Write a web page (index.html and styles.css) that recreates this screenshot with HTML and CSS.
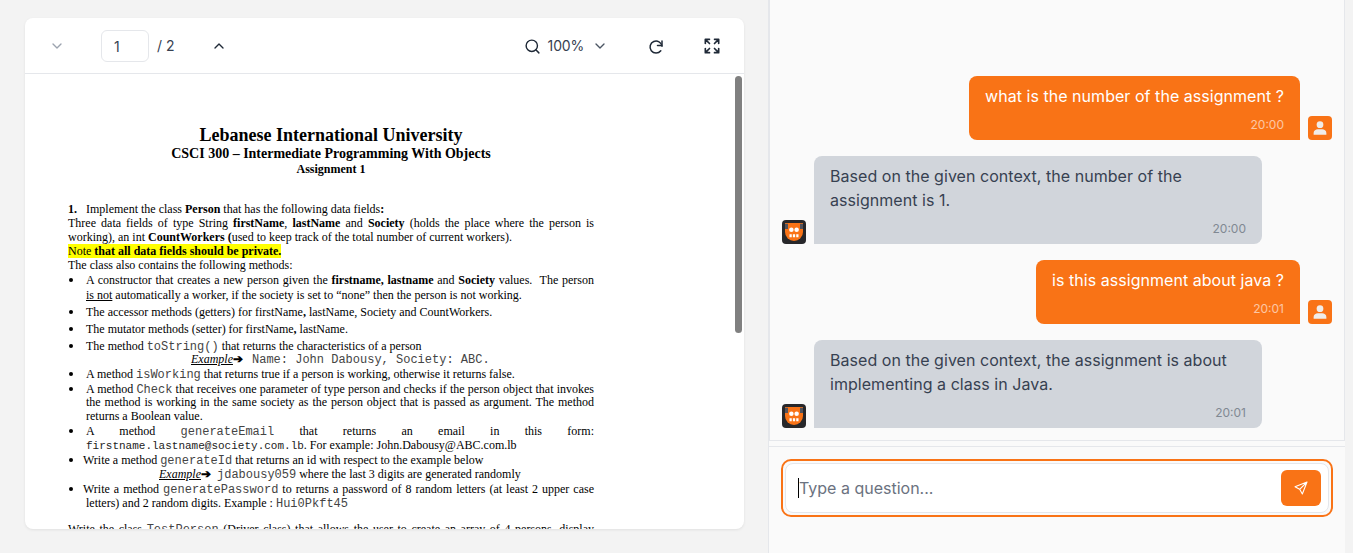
FILE: index.html
```html
<!DOCTYPE html>
<html lang="en">
<head>
    <meta charset="UTF-8">
    <title>Chat with PDF</title>
    <link rel="stylesheet" href="styles.css">
</head>
<body>
    <div class="app">
        <div class="viewer-pane">
            <div class="viewer">
                <div class="toolbar">
                    <svg class="icon chev-prev" viewBox="0 0 24 24"><path d="M6 9l6 6 6-6"/></svg>
                    <input class="page-input" type="text" value="1">
                    <span class="page-total">/ 2</span>
                    <svg class="icon chev-next" viewBox="0 0 24 24"><path d="M6 15l6-6 6 6"/></svg>
                    <svg class="icon search" viewBox="0 0 24 24"><circle cx="11" cy="11" r="8"/><path d="M21 21l-4.300-4.300"/></svg>
                    <span class="zoom-value">100%</span>
                    <svg class="icon chev-zoom" viewBox="0 0 24 24"><path d="M6 9l6 6 6-6"/></svg>
                    <svg class="icon reload" viewBox="0 0 24 24"><path d="M20 11a8 8 0 1 0-1.600 6"/><path d="M20 4v6h-6"/></svg>
                    <svg class="icon expand" viewBox="0 0 24 24"><path d="M4 9V4h5M4 4l5 5M15 4h5v5M20 4l-5 5M4 15v5h5M4 20l5-5M20 15v5h-5M20 20l-5-5"/></svg>
                </div>
                <div class="doc-scroll">
                    <div class="scroll-thumb"></div>
                    <div class="doc">
                        <div class="title">Lebanese International University</div>
                        <div class="subtitle">CSCI 300 – Intermediate Programming With Objects</div>
                        <div class="subsub">Assignment 1</div>

                        <div class="ln first"><b>1.</b>&nbsp;&nbsp; Implement the class <b>Person</b> that has the following data fields<b>:</b></div>
                        <div class="ln just">Three data fields of type String <b>firstName</b>, <b>lastName</b> and <b>Society</b> (holds the place where the person is</div>
                        <div class="ln">working), an int <b>CountWorkers (</b>used to keep track of the total number of current workers).</div>
                        <div class="ln"><span class="mark">Note <b>that all data fields should be private.</b></span></div>
                        <div class="ln">The class also contains the following methods:</div>
                        <div class="ln item g15 just">A constructor that creates a new person given the <b>firstname, lastname</b> and <b>Society</b> values.&nbsp; The person</div>
                        <div class="ln cont g15"><u>is not</u> automatically a worker, if the society is set to “none” then the person is not working.</div>
                        <div class="ln item g17">The accessor methods (getters) for firstName<b>,</b> lastName, Society and CountWorkers.</div>
                        <div class="ln item g17">The mutator methods (setter) for firstName<b>,</b> lastName.</div>
                        <div class="ln item g17">The method <code>toString()</code> that returns the characteristics of a person</div>
                        <div class="ln example g13"><i><u>Example</u></i><b class="arrow">➔</b> <code class="after-arrow">Name: John Dabousy, Society: ABC.</code></div>
                        <div class="ln item g15">A method <code>isWorking</code> that returns true if a person is working, otherwise it returns false.</div>
                        <div class="ln item g15 just">A method <code>Check</code> that receives one parameter of type person and checks if the person object that invokes</div>
                        <div class="ln cont g13 just">the method is working in the same society as the person object that is passed as argument. The method</div>
                        <div class="ln cont">returns a Boolean value.</div>
                        <div class="ln item g15 just">A method <code>generateEmail</code> that returns an email in this form:</div>
                        <div class="ln cont"><code class="small">firstname.lastname@society.com.lb</code>. For example: John.Dabousy@ABC.com.lb</div>
                        <div class="ln item tight g15">Write a method <code>generateId</code> that returns an id with respect to the example below</div>
                        <div class="ln example2"><i><u>Example</u></i><b class="arrow">➔</b> <code>jdabousy059</code> where the last 3 digits are generated randomly</div>
                        <div class="ln item tight g15 just">Write a method <code>generatePassword</code> to returns a password of 8 random letters (at least 2 upper case</div>
                        <div class="ln cont">letters) and 2 random digits. Example : <code>Hui0Pkft45</code></div>
                        <div class="ln g26 just">Write the class <code>TestPerson</code> (Driver class) that allows the user to create an array of 4 persons, display</div>
                    </div>
                </div>
            </div>
        </div>

        <div class="chat-pane">
            <div class="messages">
                <div class="row row-user">
                    <div class="bubble bubble-user">
                        <div class="msg">what is the number of the assignment ?</div>
                        <div class="time">20:00</div>
                    </div>
                    <div class="avatar avatar-user">
                        <svg viewBox="0 0 24 24"><circle cx="12" cy="7.500" r="4.500"/><path d="M3.500 21v-2.500C3.500 15 6.500 13.500 9 13.500h6c2.500 0 5.500 1.500 5.500 5V21z"/></svg>
                    </div>
                </div>
                <div class="row row-bot">
                    <div class="avatar avatar-bot">
                        <svg viewBox="0 0 24 24"><path class="face" d="M0 0h24v12a12 12 0 0 1-24 0z"/><path class="ear" d="M0 1h4v7H0zM20 1h4v7h-4z"/><circle class="eye" cx="8.500" cy="9" r="3"/><circle class="eye" cx="15.500" cy="9" r="3"/><path class="eye" d="M6 15h3v4H6zM10.500 15h3v4h-3zM15 15h3v4h-3z"/></svg>
                    </div>
                    <div class="bubble bubble-bot">
                        <div class="msg">Based on the given context, the number of the assignment is 1.</div>
                        <div class="time">20:00</div>
                    </div>
                </div>
                <div class="row row-user">
                    <div class="bubble bubble-user">
                        <div class="msg">is this assignment about java ?</div>
                        <div class="time">20:01</div>
                    </div>
                    <div class="avatar avatar-user">
                        <svg viewBox="0 0 24 24"><circle cx="12" cy="7.500" r="4.500"/><path d="M3.500 21v-2.500C3.500 15 6.500 13.500 9 13.500h6c2.500 0 5.500 1.500 5.500 5V21z"/></svg>
                    </div>
                </div>
                <div class="row row-bot">
                    <div class="avatar avatar-bot">
                        <svg viewBox="0 0 24 24"><path class="face" d="M0 0h24v12a12 12 0 0 1-24 0z"/><path class="ear" d="M0 1h4v7H0zM20 1h4v7h-4z"/><circle class="eye" cx="8.500" cy="9" r="3"/><circle class="eye" cx="15.500" cy="9" r="3"/><path class="eye" d="M6 15h3v4H6zM10.500 15h3v4h-3zM15 15h3v4h-3z"/></svg>
                    </div>
                    <div class="bubble bubble-bot">
                        <div class="msg">Based on the given context, the assignment is about implementing a class in Java.</div>
                        <div class="time">20:01</div>
                    </div>
                </div>
            </div>
            <div class="composer">
                <div class="ring">
                    <div class="field">
                        <span class="caret"></span>
                        <span class="placeholder">Type a question...</span>
                        <button class="send" type="button">
                            <svg viewBox="0 0 24 24"><path d="M21 3L3 10l7 4 4 7zM21 3L10 14"/></svg>
                        </button>
                    </div>
                </div>
            </div>
        </div>
    </div>
</body>
</html>
```

FILE: styles.css
```css
html, body {
    height: 100%;
    margin: 0;
    overflow: hidden;
}
body {
    background-color: #f3f3f3;
    font-family: Inter, "Liberation Sans", sans-serif;
    color: #374151;
}
.app {
    display: flex;
    height: 553px;
}

/* pdf viewer */
.viewer-pane {
    width: 768px;
    flex: none;
    padding: 18px 24px 24px 25px;
    box-sizing: border-box;
}
.viewer {
    height: 511px;
    background: white;
    border-radius: 8px;
    box-shadow: 0 1px 3px rgba(0, 0, 0, 0.08);
    display: flex;
    flex-direction: column;
    overflow: hidden;
}
.toolbar {
    height: 56px;
    flex: none;
    box-sizing: border-box;
    border-bottom: 1px solid #e5e7eb;
    padding: 12px 0 0 24px;
    display: flex;
    align-items: flex-start;
    font-size: 14px;
}
.icon {
    flex: none;
    width: 16px;
    height: 16px;
    margin-top: 8px;
    fill: none;
    stroke: #1f2937;
    stroke-width: 2;
    stroke-linecap: round;
    stroke-linejoin: round;
}
.chev-prev {
    stroke: #9ca3af;
}
.page-input {
    width: 48px;
    height: 32px;
    box-sizing: border-box;
    margin-left: 36px;
    padding: 0 12px;
    border: 1px solid #e5e7eb;
    border-radius: 6px;
    font: 14px Inter, sans-serif;
    color: #374151;
}
.page-total {
    margin-left: 8px;
    line-height: 32px;
}
.chev-next {
    margin-left: 36px;
}
.search {
    margin-left: 297px;
    width: 17px;
    height: 17px;
}
.zoom-value {
    margin-left: 7px;
    line-height: 32px;
    letter-spacing: -0.1px;
}
.chev-zoom {
    margin-left: 8px;
    stroke: #4b5563;
}
.reload {
    margin-left: 39px;
    width: 18px;
    height: 18px;
}
.expand {
    margin-left: 37px;
    margin-top: 6px;
    width: 20px;
    height: 20px;
}
.doc-scroll {
    position: relative;
    flex: 1;
    overflow: hidden;
}
.scroll-thumb {
    position: absolute;
    top: 2px;
    right: 2px;
    width: 7px;
    height: 257px;
    border-radius: 4px;
    background: #808080;
}
.doc {
    width: 526px;
    margin-left: 43px;
    padding-top: 51px;
    font-family: "Liberation Serif", "Times New Roman", serif;
    font-size: 12px;
    color: #000;
}
.title {
    text-align: center;
    font-weight: bold;
    font-size: 18px;
    line-height: 21px;
}
.subtitle {
    text-align: center;
    font-weight: bold;
    font-size: 14px;
    line-height: 16px;
}
.subsub {
    text-align: center;
    font-weight: bold;
    font-size: 12px;
    line-height: 14px;
}
.ln {
    height: 14px;
    line-height: 14px;
    white-space: nowrap;
}
.ln.just {
    white-space: normal;
    text-align: justify;
    text-align-last: justify;
}
.first {
    margin-top: 26px;
}
.item {
    position: relative;
    margin-left: 18px;
}
.item::before {
    content: "";
    position: absolute;
    left: -17px;
    top: 5px;
    width: 4px;
    height: 4px;
    border-radius: 50%;
    background: #000;
}
.tight {
    text-indent: -3px;
}
.cont {
    margin-left: 18px;
}
.example {
    padding-left: 123px;
}
.example2 {
    padding-left: 91px;
}
.arrow {
    margin-right: 3px;
}
.after-arrow {
    margin-left: 3px;
}
.g13 {
    margin-top: -1px;
}
.g15 {
    margin-top: 1px;
}
.g17 {
    margin-top: 3px;
}
.g26 {
    margin-top: 12px;
}
.mark {
    background: #ffff00;
}
code {
    font-family: "Liberation Mono", "Courier New", monospace;
    font-size: 12px;
    color: #444;
}
code.small {
    font-size: 11px;
    color: #222;
}

/* chat */
.chat-pane {
    width: 577px;
    flex: none;
    box-sizing: border-box;
    border-left: 1px solid #e5e7eb;
    background: #fafafa;
    display: flex;
    flex-direction: column;
}
.messages {
    height: 441px;
    flex: none;
    box-sizing: border-box;
    padding: 76px 12px 0 12px;
    border-left: 1px solid #e5e7eb;
    border-right: 1px solid #e5e7eb;
    border-bottom: 1px solid #e5e7eb;
    display: flex;
    flex-direction: column;
    gap: 16px;
    overflow: hidden;
}
.row {
    display: flex;
    align-items: flex-end;
    gap: 8px;
}
.row-user {
    justify-content: flex-end;
}
.avatar {
    width: 24px;
    height: 24px;
    flex: none;
    border-radius: 4px;
    overflow: hidden;
}
.avatar svg {
    display: block;
}
.avatar-user {
    background: #f97316;
}
.avatar-user svg {
    width: 18px;
    height: 18px;
    margin: 3px;
    fill: #f0ece8;
}
.avatar-bot {
    background: #27272a;
}
.avatar-bot svg {
    width: 18px;
    height: 18px;
    margin: 3px;
}
.face {
    fill: #f97316;
}
.ear {
    fill: #52525b;
}
.eye {
    fill: #fff;
}
.bubble {
    padding: 8px 16px;
    border-radius: 8px;
    font-size: 16px;
    line-height: 24px;
    letter-spacing: 0.04px;
    box-sizing: border-box;
}
.bubble-user {
    background: #f97316;
    color: white;
    border-bottom-right-radius: 0;
}
.bubble-bot {
    width: 448px;
    background: #d1d5db;
    color: #374151;
    border-bottom-left-radius: 0;
}
.time {
    margin-top: 9px;
    margin-bottom: -1px;
    text-align: right;
    font-size: 12px;
    line-height: 16px;
    letter-spacing: 0;
    opacity: 0.6;
}
.bubble-bot .time {
    color: #4b5563;
}
.composer {
    margin-top: 5px;
    flex: 1;
    border-top: 1px solid #e5e7eb;
    padding: 12px 12px 0 12px;
}
.ring {
    height: 58px;
    box-sizing: border-box;
    border: 2px solid #f97316;
    border-radius: 10px;
    padding: 2px;
}
.field {
    position: relative;
    height: 100%;
    box-sizing: border-box;
    background: white;
    border: 1px solid #e5e7eb;
    border-radius: 8px;
    display: flex;
    align-items: center;
    padding: 0 7px 0 12px;
}
.caret {
    width: 1px;
    height: 20px;
    background: #000;
    flex: none;
}
.placeholder {
    flex: 1;
    font-size: 16px;
    color: #6b7280;
}
.send {
    width: 40px;
    height: 36px;
    flex: none;
    border: none;
    border-radius: 6px;
    background: #f97316;
    padding: 0;
    display: flex;
    align-items: center;
    justify-content: center;
}
.send svg {
    width: 16px;
    height: 16px;
    fill: none;
    stroke: white;
    stroke-width: 1.6;
    stroke-linejoin: round;
    stroke-linecap: round;
}
```
